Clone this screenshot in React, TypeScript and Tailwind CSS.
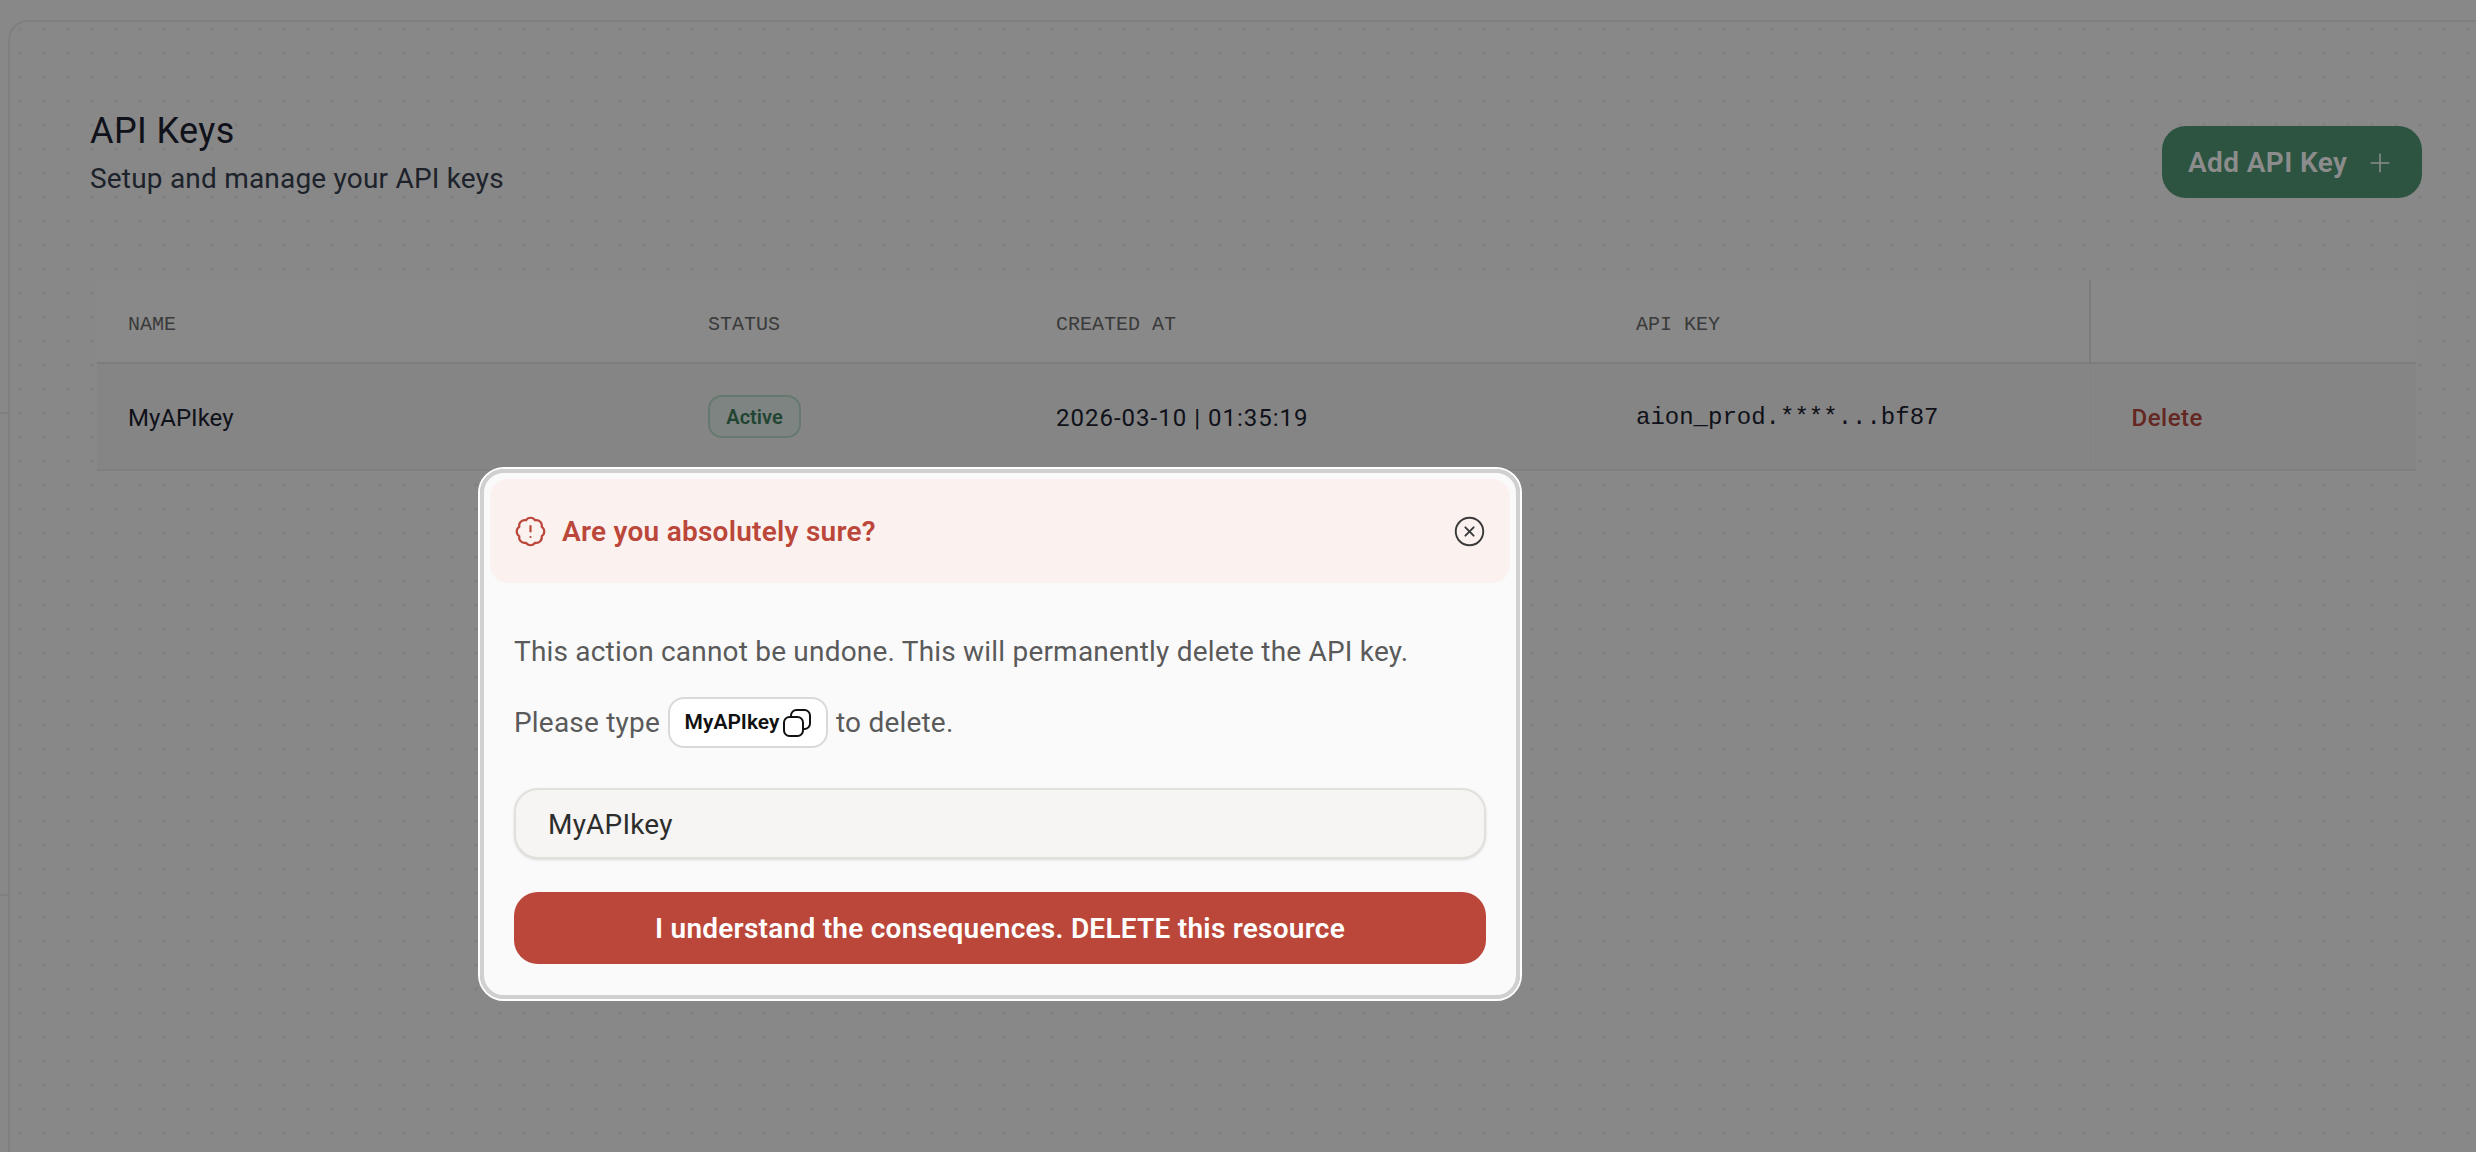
import { BadgeAlert, CircleX, Plus } from 'lucide-react';

const sans = "font-['Roboto',sans-serif]";

function CopyIcon() {
  return (
    <svg width="28" height="28" viewBox="0 0 28 28" fill="none" stroke="currentColor" strokeWidth="2">
      <rect x="1" y="8" width="19" height="19" rx="5.5" />
      <path d="M8 8V6.5A5.5 5.5 0 0 1 13.500 1h8A5.500 5.500 0 0 1 27 6.500v8a5.500 5.500 0 0 1-5.500 5.500H20" />
    </svg>
  );
}

export default function App() {
  return (
    <div className={`relative h-[1152px] w-[2476px] overflow-hidden bg-[#f7f7f7] ${sans}`}>
      <div className="flex h-full">
        {/* edge of the collapsed sidebar */}
        <div className="flex w-[8px] shrink-0 flex-col">
          <div className="h-[414px] border-b-2 border-[#e8e8e8]" />
          <div className="h-[482px] border-b-2 border-[#e8e8e8]" />
        </div>

        <main className="mt-[20px] min-w-0 flex-1 rounded-tl-[20px] border-l-2 border-t-2 border-[#e8e8e8] bg-[radial-gradient(circle,#ececec_1.5px,transparent_2px)] bg-[length:24px_24px] bg-[position:-2px_-5px] pl-[80px] pr-[54px]">
          <div className="flex items-start justify-between pt-[86px]">
            <div>
              <h1 className="pt-[1px] text-[36px] leading-[44px] tracking-[0.4px] text-[#1c2230]">API Keys</h1>
              <p className="mt-[8px] text-[28px] leading-[36px] tracking-[0.2px] text-[#37404f]">Setup and manage your API keys</p>
            </div>
            <button className="mt-[18px] flex h-[72px] w-[260px] items-center rounded-[24px] bg-[#509976] pl-[26px] pt-[2px] text-[28px] font-semibold tracking-[0.4px] text-white">
              Add API Key
              <Plus className="ml-[18px] h-[30px] w-[30px]" strokeWidth={1.25} />
            </button>
          </div>

          <table className="ml-[7px] mt-[82px] w-[2319px] table-fixed bg-[#f9f9f9]">
            <thead>
              <tr className="h-[83px] border-b-2 border-[#e2e2e2] text-left font-['Liberation_Mono',monospace] text-[20px] font-normal text-[#6b6b6b]">
                <th className="w-[611px] pl-[31px] pt-[8px] font-normal">NAME</th>
                <th className="w-[348px] pt-[8px] font-normal">STATUS</th>
                <th className="w-[580px] pt-[8px] font-normal">CREATED AT</th>
                <th className="w-[454px] pt-[8px] font-normal">API KEY</th>
                <th className="border-l-2 border-[#e2e2e2] font-normal" />
              </tr>
            </thead>
            <tbody>
              <tr className="h-[107px] border-b-2 border-[#e8e8e8] bg-[#f2f2f2] text-[24px] text-[#1c2230]">
                <td className="pl-[31px] pt-[2px]">MyAPIkey</td>
                <td>
                  <span className="inline-flex h-[43px] w-[93px] items-center justify-center rounded-[14px] border-2 border-[#b9dcc9] bg-[#e6f1eb] text-[20px] font-semibold text-[#3f7c5e]">
                    Active
                  </span>
                </td>
                <td className="pt-[2px] tracking-[1px]">2026-03-10 | 01:35:19</td>
                <td className="pt-[3px] font-['Liberation_Mono',monospace]">aion_prod.****...bf87</td>
                <td className="border-l border-[#ededed] pl-[41px] pt-[2px] font-medium tracking-[0.5px] text-[#b8483c]">Delete</td>
              </tr>
            </tbody>
          </table>
        </main>
      </div>

      {/* backdrop */}
      <div className="absolute inset-0 bg-black/45" />

      {/* delete dialog */}
      <div className="absolute left-[480px] top-[469px] w-[1040px] rounded-[24px] border-4 border-[#d0d0d0] bg-[#fafafa] p-[6px] tracking-[0.2px] outline-2 outline-white">
        <div className="flex h-[104px] items-center justify-between rounded-[18px] bg-[#fbf2f0] pl-[24px] pr-[24px]">
          <div className="flex items-center gap-[15px] text-[28px] font-semibold tracking-[0.25px] text-[#bb473a]">
            <BadgeAlert className="h-[33px] w-[33px]" strokeWidth={1.6} />
            <span className="pt-[1px]">Are you absolutely sure?</span>
          </div>
          <CircleX className="h-[33px] w-[33px] text-[#3a3a3a]" strokeWidth={1.4} />
        </div>

        <div className="px-[24px] pb-[25px] pt-[49px] text-[28px] text-[#5a5a5a]">
          <p className="leading-[40px]">This action cannot be undone. This will permanently delete the API key.</p>
          <div className="mt-[25px] flex items-center gap-[8px]">
            <span>Please type</span>
            <span className="flex h-[51px] w-[160px] items-center justify-center gap-[4px] rounded-[16px] border-2 border-[#d9d9d9] bg-white text-[21px] font-semibold tracking-normal text-[#111]">
              MyAPIkey
              <CopyIcon />
            </span>
            <span>to delete.</span>
          </div>
          <input
            readOnly
            value="MyAPIkey"
            className="mt-[40px] h-[71px] w-full rounded-[24px] border-2 border-[#e2e0dd] bg-[#f6f5f3] pl-[32px] pt-[2px] text-[28px] text-[#2d2d2d] shadow-sm outline-none"
          />
          <button className="mt-[33px] h-[72px] w-full rounded-[24px] bg-[#bb473a] pt-[2px] text-[28px] font-semibold tracking-[0.25px] text-white">
            I understand the consequences. DELETE this resource
          </button>
        </div>
      </div>
    </div>
  );
}
